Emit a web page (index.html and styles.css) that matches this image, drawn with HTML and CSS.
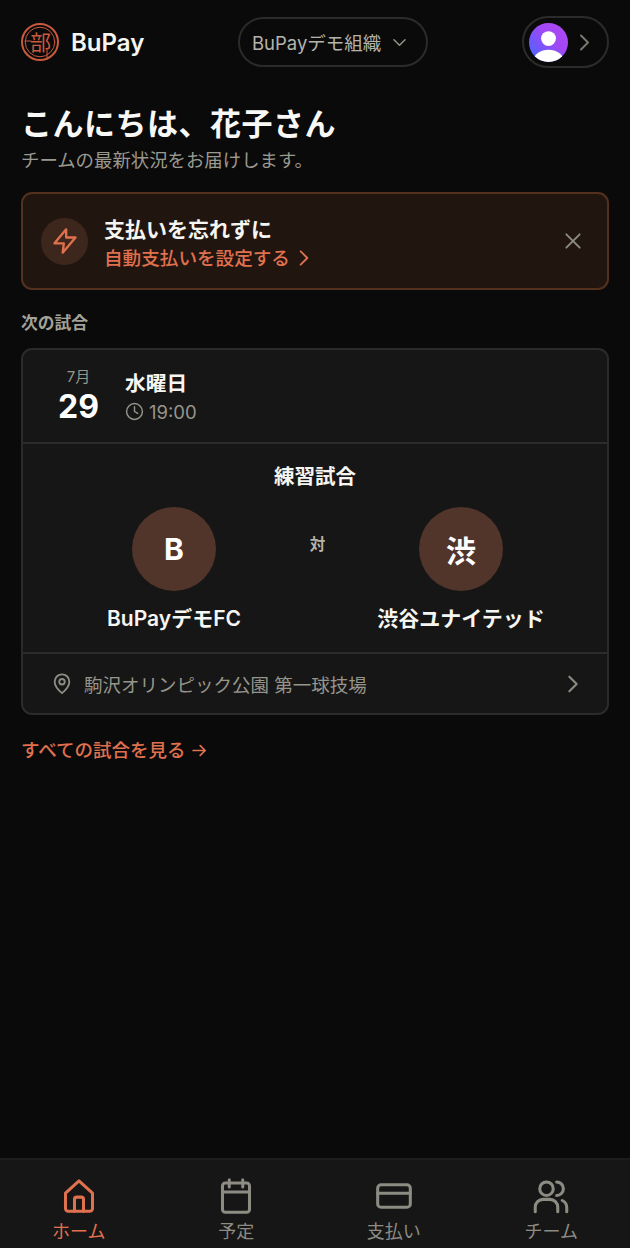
FILE: index.html
```html
<!DOCTYPE html>
<html lang="ja">
<head>
<meta charset="utf-8">
<title>BuPay</title>
<link rel="stylesheet" href="styles.css">
</head>
<body>
<div class="app">
  <header class="top">
    <div class="brand">
      <svg class="logo" viewBox="0 0 38 38">
        <circle cx="19" cy="19" r="18"/>
        <circle cx="19" cy="19" r="14.800" class="logo-thin"/>
        <path class="logo-thin" d="M4 18h6M26 27v9"/>
        <text x="19.500" y="27" text-anchor="middle" class="logo-kanji">部</text>
      </svg>
      <span class="brand-name">BuPay</span>
    </div>
    <button class="org"><span>BuPayデモ組織</span>
      <svg class="org-chev" viewBox="0 0 24 24"><path d="M5 8.500l7 7 7-7"/></svg>
    </button>
    <button class="user">
      <span class="avatar">
        <svg viewBox="0 0 40 40"><circle cx="20" cy="16" r="7.600" fill="#fff"/><ellipse cx="20" cy="38" rx="15" ry="10.500" fill="#fff"/></svg>
      </span>
      <svg class="user-chev" viewBox="0 0 24 24"><path d="M8 4l8 8-8 8"/></svg>
    </button>
  </header>

  <main class="content">
    <h1 class="hello">こんにちは、花子さん</h1>
    <p class="sub">チームの最新状況をお届けします。</p>

    <section class="banner">
      <div class="bolt">
        <svg viewBox="0 0 24 24"><path d="M13 2L3 14h8l-1 8 11-13h-8z"/></svg>
      </div>
      <div class="banner-text">
        <div class="banner-title">支払いを忘れずに</div>
        <div class="banner-link">自動支払いを設定する
          <svg viewBox="0 0 24 24"><path d="M8 4l8 8-8 8"/></svg>
        </div>
      </div>
      <svg class="close" viewBox="0 0 24 24"><path d="M4 4l16 16M20 4L4 20"/></svg>
    </section>

    <h2 class="label">次の試合</h2>

    <section class="card">
      <div class="when">
        <div class="date"><span class="month">7月</span><span class="day">29</span></div>
        <div class="time-col">
          <div class="weekday">水曜日</div>
          <div class="time">
            <svg viewBox="0 0 24 24"><circle cx="12" cy="12" r="10"/><path d="M12 6v6l4 2.500"/></svg>
            <span>19:00</span>
          </div>
        </div>
      </div>
      <div class="match">
        <div class="match-title">練習試合</div>
        <div class="teams">
          <div class="team"><div class="crest">B</div><div class="team-name">BuPayデモFC</div></div>
          <div class="vs">対</div>
          <div class="team"><div class="crest">渋</div><div class="team-name">渋谷ユナイテッド</div></div>
        </div>
      </div>
      <div class="venue">
        <svg class="pin" viewBox="0 0 24 24"><path d="M12 22s8-6.800 8-12.500a8 8 0 0 0-16 0C4 15.200 12 22 12 22z"/><circle cx="12" cy="9.500" r="3"/></svg>
        <span class="venue-name">駒沢オリンピック公園 第一球技場</span>
        <svg class="venue-chev" viewBox="0 0 24 24"><path d="M8 4l8 8-8 8"/></svg>
      </div>
    </section>

    <a class="all">すべての試合を見る <svg viewBox="0 0 24 24"><path d="M3 12h17M13 5l7 7-7 7"/></svg></a>
  </main>

  <nav class="tabs">
    <div class="tab active">
      <svg viewBox="0 0 32 32"><path d="M4 13.500L16 2.500l12 11V27a2.500 2.500 0 0 1-2.500 2.500h-19A2.500 2.500 0 0 1 4 27z"/><path d="M12 29.500V19a2 2 0 0 1 2-2h4a2 2 0 0 1 2 2v10.500"/></svg>
      <span>ホーム</span>
    </div>
    <div class="tab">
      <svg viewBox="0 0 32 32"><rect x="4" y="4.500" width="24" height="26" rx="2.500"/><path d="M4 12.500h24M10 1.500V8M22 1.500V8"/></svg>
      <span>予定</span>
    </div>
    <div class="tab">
      <svg viewBox="0 0 32 32"><rect x="1.500" y="6" width="29" height="20" rx="3"/><path d="M1.500 13.500h29"/></svg>
      <span>支払い</span>
    </div>
    <div class="tab">
      <svg viewBox="0 0 32 32"><circle cx="12" cy="9.500" r="6"/><path d="M2 30v-4a7 7 0 0 1 7-7h6a7 7 0 0 1 7 7v4M21 3.500a6 6 0 0 1 0 12M26 20a7 7 0 0 1 4 6.500V30"/></svg>
      <span>チーム</span>
    </div>
  </nav>
</div>
</body>
</html>
```
FILE: styles.css
```css
* { box-sizing: border-box; margin: 0; padding: 0; }
html, body { height: 100%; }
body {
  background: #0a0a0a;
  color: #fff;
  font-family: Inter, "Noto Sans CJK JP", sans-serif;
  overflow: hidden;
}
svg { display: block; fill: none; stroke: currentColor; stroke-linecap: round; stroke-linejoin: round; }
button { font: inherit; background: none; color: inherit; }
.app { height: 1248px; display: flex; flex-direction: column; }

.top { display: flex; align-items: center; padding: 16px 21px 0; height: 68px; }
.brand { display: flex; align-items: center; gap: 12px; width: 217px; }
.logo { width: 38px; height: 38px; color: #c85a3e; stroke-width: 2; }
.logo-thin { stroke-width: 1; }
.logo-kanji { font-size: 21px; fill: #c85a3e; stroke: none; }
.brand-name { font-size: 24px; font-weight: 600; color: #f5f5f2; }
.org {
  width: 190px; height: 50px; border: 2px solid #2b2b29; border-radius: 25px;
  display: flex; align-items: center; gap: 9px; padding-left: 12px;
  font-size: 18.500px; color: #b5b4ab;
}
.org-chev { width: 19px; height: 19px; stroke-width: 2; color: #918f86; }
.user {
  width: 87px; height: 52px; border: 2px solid #2b2b29; border-radius: 26px; margin-left: auto;
  display: flex; align-items: center; gap: 6px; padding-left: 5px;
}
.avatar {
  width: 39px; height: 39px; border-radius: 50%; overflow: hidden; flex: none;
  background: linear-gradient(45deg, #4f63ff 10%, #a247f5 60%, #b04af0);
}
.avatar svg { width: 100%; height: 100%; stroke: none; }
.user-chev { width: 21px; height: 21px; stroke-width: 2.200; color: #7b7a72; }

.content { flex: 1; padding: 36px 21px 0; }
.hello { font-size: 31px; font-weight: 700; line-height: 40px; letter-spacing: 0.500px; color: #f8f8f6; }
.sub { font-size: 18.400px; line-height: 22px; color: #9a998f; margin-top: 5px; }

.banner {
  margin-top: 21px; height: 98px;
  background: #21160f; border: 2px solid #54301f; border-radius: 11px;
  display: flex; align-items: center; padding: 0 24px 0 18px; gap: 16px;
}
.bolt {
  width: 47px; height: 47px; border-radius: 50%; background: #3d261b; color: #e0714f;
  display: flex; align-items: center; justify-content: center;
}
.bolt svg { width: 28px; height: 28px; stroke-width: 2; }
.banner-text { flex: 1; padding-top: 5px; }
.banner-title { font-size: 21px; line-height: 28px; font-weight: 600; color: #f5f5f2; }
.banner-link { display: flex; align-items: center; gap: 4px; font-size: 18.600px; line-height: 28px; font-weight: 500; color: #e0714f; }
.banner-link svg { width: 20px; height: 20px; stroke-width: 2.200; }
.close { width: 20px; height: 20px; stroke-width: 2.200; color: #8d8c83; }

.label { font-size: 16.800px; line-height: 22px; font-weight: 600; color: #a3a299; margin-top: 22px; }

.card {
  margin-top: 14px; background: #161616; border: 2px solid #2b2b29; border-radius: 11px;
  overflow: hidden;
}
.when { height: 94px; display: flex; align-items: center; padding: 0 26px 0 0; border-bottom: 2px solid #2b2b29; }
.date { width: 102px; display: flex; flex-direction: column; align-items: center; padding-left: 9px; }
.month { font-size: 15px; line-height: 18px; color: #96958c; }
.day { font-size: 32px; line-height: 38px; font-weight: 700; color: #fff; margin-top: 2px; margin-bottom: -2px; }
.time-col { display: flex; flex-direction: column; gap: 2px; padding-top: 1px; }
.weekday { font-size: 20.700px; line-height: 28px; font-weight: 600; color: #f5f5f2; }
.time { display: flex; align-items: center; gap: 5px; font-size: 18.500px; line-height: 24px; color: #96958c; }
.time svg { width: 19px; height: 19px; stroke-width: 1.800; }

.match { height: 210px; padding-top: 19px; border-bottom: 2px solid #2b2b29; }
.match-title { text-align: center; font-size: 20.500px; line-height: 28px; font-weight: 600; color: #f5f5f2; }
.teams { display: flex; justify-content: space-between; padding: 0 6px 0 11px; margin-top: 16px; }
.team { width: 280px; display: flex; flex-direction: column; align-items: center; }
.crest {
  width: 84px; height: 84px; border-radius: 50%; background: #51342a;
  display: flex; align-items: center; justify-content: center;
  font-size: 30px; font-weight: 700; color: #fff;
}
.team-name { margin-top: 14px; font-size: 21px; line-height: 28px; font-weight: 600; color: #f5f5f2; white-space: nowrap; }
.vs { font-size: 15.500px; line-height: 20px; font-weight: 600; color: #b5b4ab; margin-top: 28px; flex: none; width: 6px; display: flex; justify-content: center; white-space: nowrap; }

.venue { height: 59px; display: flex; align-items: center; padding: 0 23px 0 28px; }
.pin { width: 22px; height: 24px; stroke-width: 2; color: #8d8c83; flex: none; }
.venue-name { flex: 1; margin-left: 11px; font-size: 18.500px; color: #96958c; white-space: nowrap; }
.venue-chev { width: 22px; height: 22px; stroke-width: 2.200; color: #8d8c83; }

.all { display: flex; align-items: center; gap: 6px; margin-top: 22px; font-size: 18.500px; line-height: 26px; font-weight: 500; color: #e0714f; }
.all svg { width: 17px; height: 17px; stroke-width: 2.400; }

.tabs { height: 90px; background: #161616; border-top: 2px solid #1d1d1c; display: grid; grid-template-columns: repeat(4, 1fr); padding: 18px 0 0; }
.tab { display: flex; flex-direction: column; align-items: center; gap: 6px; color: #8d8c83; font-size: 18px; line-height: 24px; }
.tab svg { width: 36px; height: 36px; stroke-width: 2.700; }
.tab.active { color: #e0714f; }
```
